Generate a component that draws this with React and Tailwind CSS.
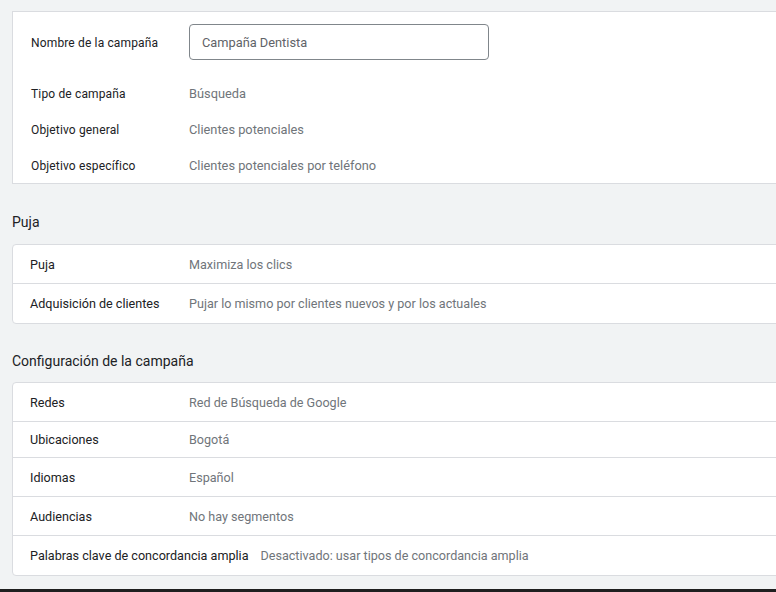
import React from 'react';

const puja = [
  { label: 'Puja', value: 'Maximiza los clics' },
  { label: 'Adquisición de clientes', value: 'Pujar lo mismo por clientes nuevos y por los actuales' },
];

const config = [
  { label: 'Redes', value: 'Red de Búsqueda de Google', h: 'h-[39px]' },
  { label: 'Ubicaciones', value: 'Bogotá', h: 'h-[36px]' },
  { label: 'Idiomas', value: 'Español', h: 'h-[39px]' },
  { label: 'Audiencias', value: 'No hay segmentos', h: 'h-[39px]' },
  { label: 'Palabras clave de concordancia amplia', value: 'Desactivado: usar tipos de concordancia amplia', h: 'h-[39px]' },
];

function Row({ label, value, h = 'h-[39px]', last }) {
  return (
    <div className={`flex items-center gap-3 pl-[17px] pt-[2px] text-[12.6px] ${h} ${last ? '' : 'border-b border-[#dadce0]'}`}>
      <div className="min-w-[147px] text-[#202124] whitespace-nowrap">{label}</div>
      <div className="text-[#70757a] whitespace-nowrap">{value}</div>
    </div>
  );
}

export default function App() {
  return (
    <div className="h-[592px] w-[776px] overflow-hidden bg-[#f1f3f4] pl-3 flex flex-col" style={{ fontFamily: 'Roboto, "Liberation Sans", sans-serif' }}>
      <div className="mt-[11px] -mr-3 bg-white border border-[#dadce0] pl-[18px] pt-3">
        <div className="flex items-center h-9">
          <div className="w-[158px] pt-[2px] text-[12px] tracking-[0.15px] text-[#202124]">Nombre de la campaña</div>
          <div className="w-[300px] h-9 border border-[#80868b] rounded-[4px] flex items-center pl-3 pt-[2px] text-[12.8px] text-[#5f6368]">
            Campaña Dentista
          </div>
        </div>
        <div className="mt-[15px]">
          {[
            ['Tipo de campaña', 'Búsqueda'],
            ['Objetivo general', 'Clientes potenciales'],
            ['Objetivo específico', 'Clientes potenciales por teléfono'],
          ].map(([l, v]) => (
            <div key={l} className="flex items-center h-9 pt-[2px]">
              <div className="w-[158px] text-[12px] tracking-[0.15px] text-[#202124]">{l}</div>
              <div className="text-[12.8px] text-[#70757a]">{v}</div>
            </div>
          ))}
        </div>
      </div>

      <div className="mt-[28px] h-5 leading-5 text-[14px] text-[#202124]">Puja</div>
      <div className="mt-3 -mr-3 bg-white border border-[#dadce0] rounded-[4px]">
        {puja.map((r, i) => (
          <Row key={r.label} {...r} last={i === puja.length - 1} />
        ))}
      </div>

      <div className="mt-[27px] h-5 leading-5 text-[14px] text-[#202124]">Configuración de la campaña</div>
      <div className="mt-[11px] -mr-3 bg-white border border-[#dadce0] rounded-[4px]">
        {config.map((r, i) => (
          <Row key={r.label} {...r} last={i === config.length - 1} />
        ))}
      </div>

      <div className="mt-auto -ml-3 h-[3px] bg-[#1f1f1f]" />
    </div>
  );
}
